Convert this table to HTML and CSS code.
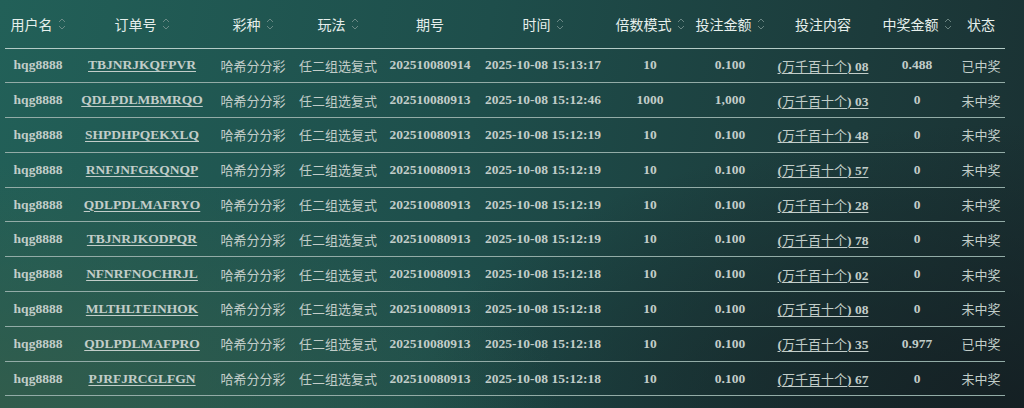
FILE: index.html
```html
<!DOCTYPE html>
<html lang="zh-CN">
<head>
<meta charset="utf-8">
<title>投注记录</title>
<link rel="stylesheet" href="styles.css">
</head>
<body>
<div class="page">
<table class="bets">
<colgroup>
<col class="c1"><col class="c2"><col class="c3"><col class="c4"><col class="c5"><col class="c6"><col class="c7"><col class="c8"><col class="c9"><col class="c10"><col class="c11">
</colgroup>
<thead>
<tr>
<th><span class="h">用户名<svg class="sort" viewBox="0 0 8 14"><path d="M1 5 L4 2 L7 5 M1 9 L4 12 L7 9"/></svg></span></th>
<th><span class="h">订单号<svg class="sort" viewBox="0 0 8 14"><path d="M1 5 L4 2 L7 5 M1 9 L4 12 L7 9"/></svg></span></th>
<th><span class="h">彩种<svg class="sort" viewBox="0 0 8 14"><path d="M1 5 L4 2 L7 5 M1 9 L4 12 L7 9"/></svg></span></th>
<th><span class="h">玩法<svg class="sort" viewBox="0 0 8 14"><path d="M1 5 L4 2 L7 5 M1 9 L4 12 L7 9"/></svg></span></th>
<th><span class="h">期号</span></th>
<th><span class="h">时间<svg class="sort" viewBox="0 0 8 14"><path d="M1 5 L4 2 L7 5 M1 9 L4 12 L7 9"/></svg></span></th>
<th><span class="h">倍数模式<svg class="sort" viewBox="0 0 8 14"><path d="M1 5 L4 2 L7 5 M1 9 L4 12 L7 9"/></svg></span></th>
<th><span class="h">投注金额<svg class="sort" viewBox="0 0 8 14"><path d="M1 5 L4 2 L7 5 M1 9 L4 12 L7 9"/></svg></span></th>
<th><span class="h">投注内容</span></th>
<th><span class="h">中奖金额<svg class="sort" viewBox="0 0 8 14"><path d="M1 5 L4 2 L7 5 M1 9 L4 12 L7 9"/></svg></span></th>
<th><span class="h">状态</span></th>
</tr>
</thead>
<tbody>
<tr><td class="n">hqg8888</td><td class="n"><a href="#">TBJNRJKQFPVR</a></td><td class="cn">哈希分分彩</td><td class="cn">任二组选复式</td><td class="n">202510080914</td><td class="n">2025-10-08 15:13:17</td><td class="n">10</td><td class="n">0.100</td><td class="n"><a href="#">(<span class="cn">万千百十个</span>) 08</a></td><td class="n">0.488</td><td class="cn">已中奖</td></tr>
<tr><td class="n">hqg8888</td><td class="n"><a href="#">QDLPDLMBMRQO</a></td><td class="cn">哈希分分彩</td><td class="cn">任二组选复式</td><td class="n">202510080913</td><td class="n">2025-10-08 15:12:46</td><td class="n">1000</td><td class="n">1,000</td><td class="n"><a href="#">(<span class="cn">万千百十个</span>) 03</a></td><td class="n">0</td><td class="cn">未中奖</td></tr>
<tr><td class="n">hqg8888</td><td class="n"><a href="#">SHPDHPQEKXLQ</a></td><td class="cn">哈希分分彩</td><td class="cn">任二组选复式</td><td class="n">202510080913</td><td class="n">2025-10-08 15:12:19</td><td class="n">10</td><td class="n">0.100</td><td class="n"><a href="#">(<span class="cn">万千百十个</span>) 48</a></td><td class="n">0</td><td class="cn">未中奖</td></tr>
<tr><td class="n">hqg8888</td><td class="n"><a href="#">RNFJNFGKQNQP</a></td><td class="cn">哈希分分彩</td><td class="cn">任二组选复式</td><td class="n">202510080913</td><td class="n">2025-10-08 15:12:19</td><td class="n">10</td><td class="n">0.100</td><td class="n"><a href="#">(<span class="cn">万千百十个</span>) 57</a></td><td class="n">0</td><td class="cn">未中奖</td></tr>
<tr><td class="n">hqg8888</td><td class="n"><a href="#">QDLPDLMAFRYO</a></td><td class="cn">哈希分分彩</td><td class="cn">任二组选复式</td><td class="n">202510080913</td><td class="n">2025-10-08 15:12:19</td><td class="n">10</td><td class="n">0.100</td><td class="n"><a href="#">(<span class="cn">万千百十个</span>) 28</a></td><td class="n">0</td><td class="cn">未中奖</td></tr>
<tr><td class="n">hqg8888</td><td class="n"><a href="#">TBJNRJKODPQR</a></td><td class="cn">哈希分分彩</td><td class="cn">任二组选复式</td><td class="n">202510080913</td><td class="n">2025-10-08 15:12:19</td><td class="n">10</td><td class="n">0.100</td><td class="n"><a href="#">(<span class="cn">万千百十个</span>) 78</a></td><td class="n">0</td><td class="cn">未中奖</td></tr>
<tr><td class="n">hqg8888</td><td class="n"><a href="#">NFNRFNOCHRJL</a></td><td class="cn">哈希分分彩</td><td class="cn">任二组选复式</td><td class="n">202510080913</td><td class="n">2025-10-08 15:12:18</td><td class="n">10</td><td class="n">0.100</td><td class="n"><a href="#">(<span class="cn">万千百十个</span>) 02</a></td><td class="n">0</td><td class="cn">未中奖</td></tr>
<tr><td class="n">hqg8888</td><td class="n"><a href="#">MLTHLTEINHOK</a></td><td class="cn">哈希分分彩</td><td class="cn">任二组选复式</td><td class="n">202510080913</td><td class="n">2025-10-08 15:12:18</td><td class="n">10</td><td class="n">0.100</td><td class="n"><a href="#">(<span class="cn">万千百十个</span>) 08</a></td><td class="n">0</td><td class="cn">未中奖</td></tr>
<tr><td class="n">hqg8888</td><td class="n"><a href="#">QDLPDLMAFPRO</a></td><td class="cn">哈希分分彩</td><td class="cn">任二组选复式</td><td class="n">202510080913</td><td class="n">2025-10-08 15:12:18</td><td class="n">10</td><td class="n">0.100</td><td class="n"><a href="#">(<span class="cn">万千百十个</span>) 35</a></td><td class="n">0.977</td><td class="cn">已中奖</td></tr>
<tr><td class="n">hqg8888</td><td class="n"><a href="#">PJRFJRCGLFGN</a></td><td class="cn">哈希分分彩</td><td class="cn">任二组选复式</td><td class="n">202510080913</td><td class="n">2025-10-08 15:12:18</td><td class="n">10</td><td class="n">0.100</td><td class="n"><a href="#">(<span class="cn">万千百十个</span>) 67</a></td><td class="n">0</td><td class="cn">未中奖</td></tr>
</tbody>
</table>
</div>
</body>
</html>
```

FILE: styles.css
```css
html, body {
  margin: 0;
  padding: 0;
  height: 100%;
}
body {
  background:
    radial-gradient(ellipse 55% 60% at 0% 100%, rgba(52, 92, 74, 0.85), rgba(52, 92, 74, 0) 100%),
    radial-gradient(ellipse 60% 70% at 100% 100%, rgba(20, 30, 34, 0.9), rgba(20, 30, 34, 0) 100%),
    linear-gradient(100deg, #226058 0%, #1e4e4b 45%, #1c3b3b 80%, #1a3032 100%);
  overflow: hidden;
}
.page {
  padding: 0 0 0 5px;
}
.bets {
  width: 1000px;
  table-layout: fixed;
  border-collapse: collapse;
  color: #c2cdc9;
}
.c1 { width: 66px; }
.c2 { width: 142px; }
.c3 { width: 80px; }
.c4 { width: 90px; }
.c5 { width: 94px; }
.c6 { width: 132px; }
.c7 { width: 82px; }
.c8 { width: 78px; }
.c9 { width: 108px; }
.c10 { width: 80px; }
.c11 { width: 48px; }

.bets th {
  height: 47.5px;
  padding: 0;
  font-family: "Noto Sans CJK SC", "Noto Sans", sans-serif;
  font-size: 14px;
  font-weight: 400;
  color: #e6efec;
  text-align: center;
  white-space: nowrap;
  vertical-align: middle;
  border-bottom: 1.5px solid #b4cbc6;
}
.h {
  display: inline-flex;
  align-items: center;
  gap: 5px;
}
.sort {
  width: 8px;
  height: 14px;
  fill: none;
  stroke: #7d9793;
  stroke-width: 1;
  opacity: 0.8;
}
.bets td {
  height: 33.8px;
  padding: 0;
  text-align: center;
  white-space: nowrap;
  vertical-align: middle;
  border-bottom: 1.5px solid #93aca7;
}
.bets .n {
  font-family: "Liberation Serif", "Times New Roman", serif;
  font-weight: 700;
  font-size: 13.5px;
}
.bets .cn {
  font-family: "Noto Sans CJK SC", "Noto Sans", sans-serif;
  font-weight: 400;
  font-size: 13px;
}
.bets a {
  color: #c2cdc9;
  text-decoration: underline;
  text-underline-offset: 2px;
  text-decoration-thickness: 1px;
}
```
